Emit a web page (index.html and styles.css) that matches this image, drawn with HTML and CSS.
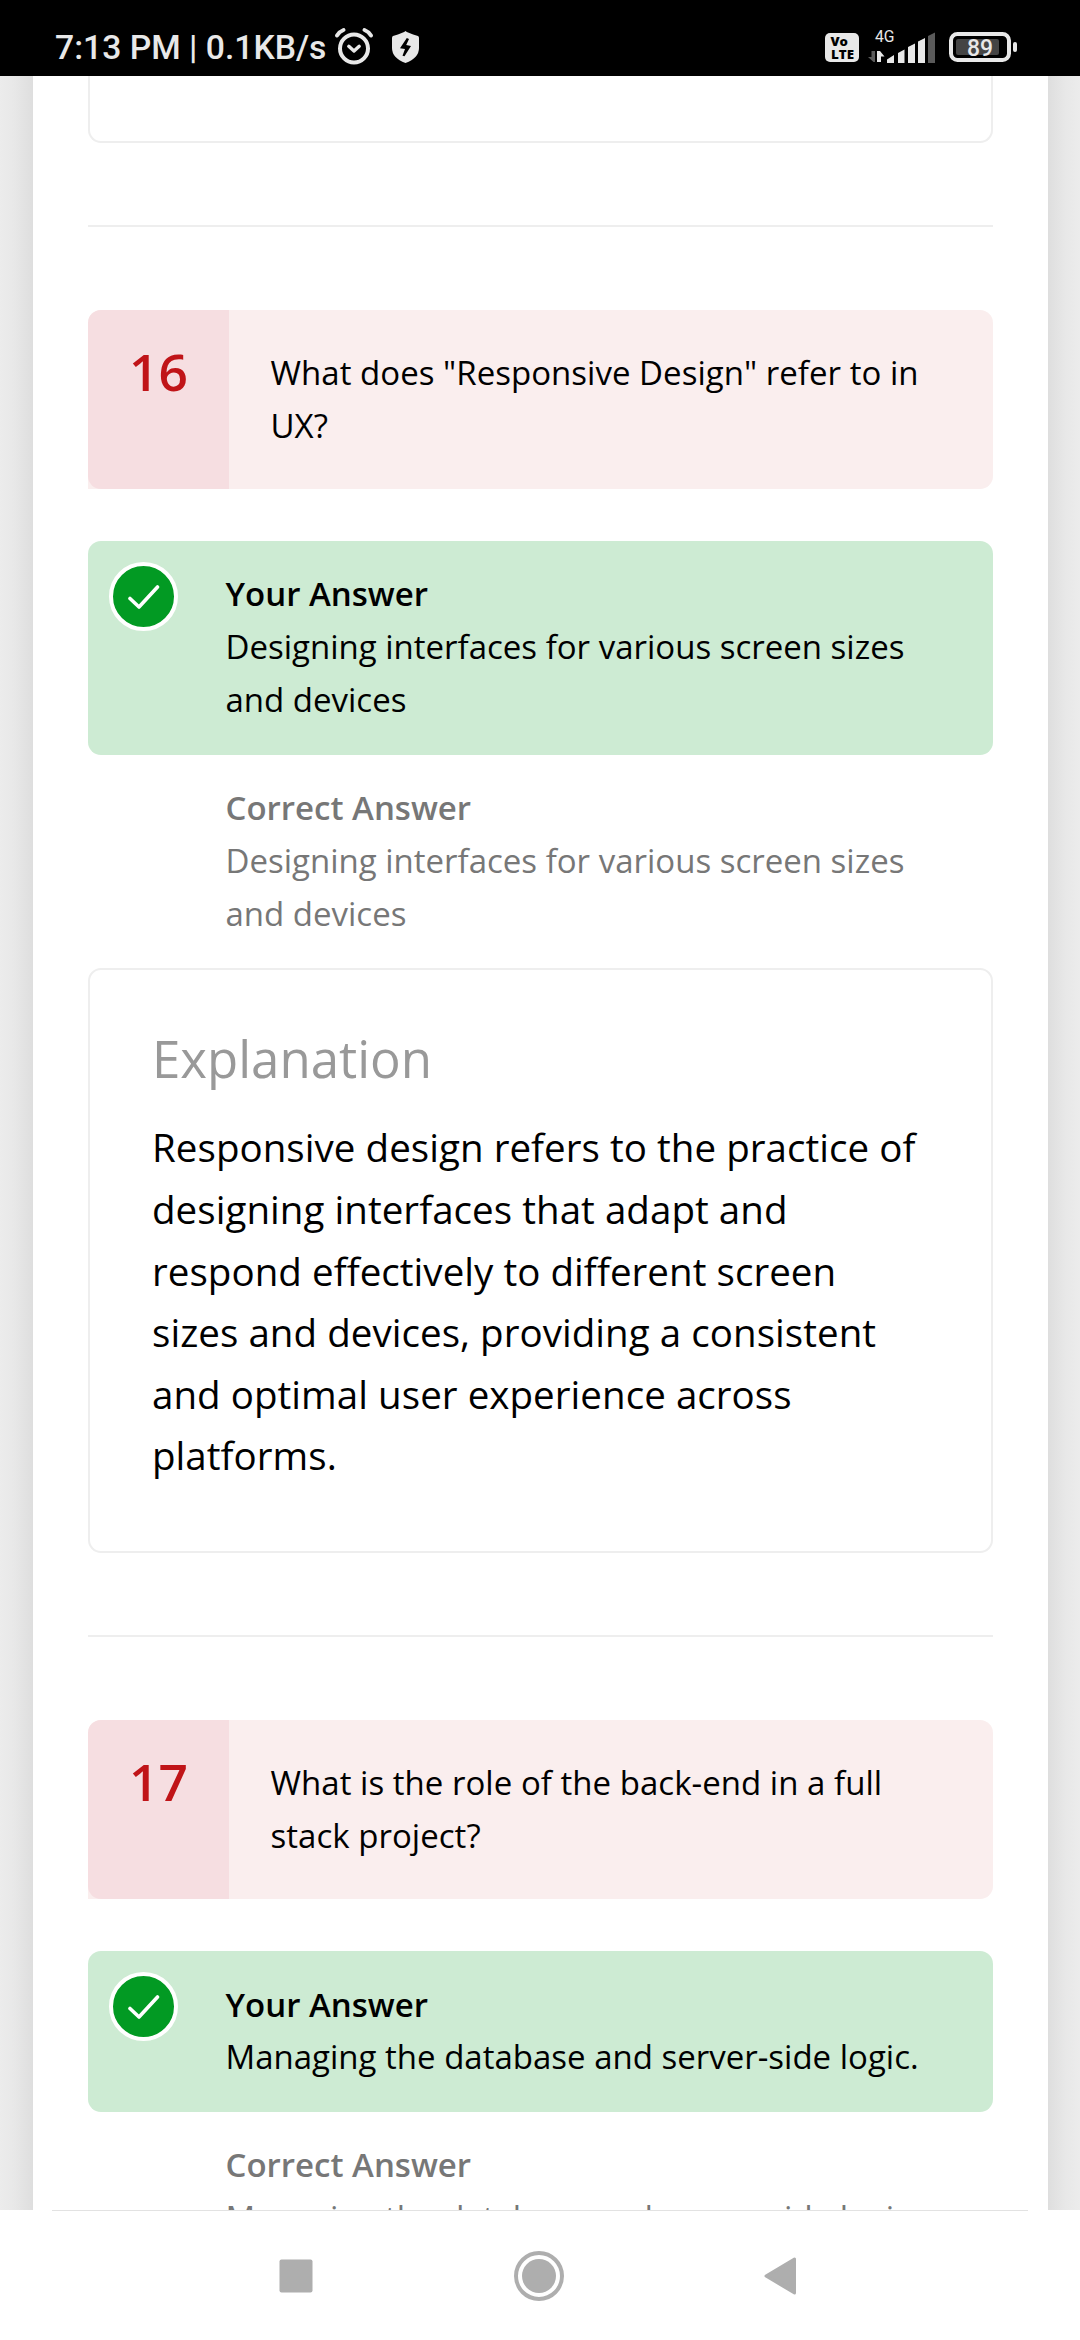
FILE: index.html
```html
<!DOCTYPE html>
<html lang="en">
<head>
<meta charset="utf-8">
<title>Quiz results</title>
<link rel="stylesheet" href="styles.css">
</head>
<body>
<div class="screen">
  <header class="status-bar">
    <div class="status-left">
      <span class="clock">7:13 PM | 0.1KB/s</span>
      <svg class="alarm" width="42" height="40" viewBox="0 0 42 40" fill="none" stroke="#e8e8e8" stroke-linecap="round" stroke-linejoin="round">
        <circle cx="21" cy="22.5" r="14" stroke-width="4"/>
        <path d="M4 9.5 Q6.5 5.5 10.5 4M38 9.5 Q35.5 5.5 31.5 4" stroke-width="4"/>
        <path d="M15.8 20.3 L21 25 L26.2 20.3" stroke-width="3.4"/>
      </svg>
      <svg class="shield" width="27" height="32" viewBox="0 0 27 32">
        <path fill="#e8e8e8" d="M13.5 0 Q15 1.5 26 5 Q27 5.500 27 7 V17 Q27 27 13.500 32 Q0 27 0 17 V7 Q0 5.500 1 5 Q12 1.500 13.500 0Z"/>
        <path fill="#000" d="M14.800 7 L8 17.200 L13 18 L10.500 24.800 L12.500 25.200 L19 15 L14.200 14 L17 8Z"/>
      </svg>
    </div>
    <div class="status-right">
      <svg class="volte" width="34" height="29" viewBox="0 0 34 29">
        <rect width="34" height="29" rx="5" fill="#e8e8e8"/>
        <text class="volte-text" x="5.500" y="13.200" textLength="17.500" lengthAdjust="spacingAndGlyphs">Vo</text>
        <text class="volte-text" x="6" y="25.500" textLength="23" lengthAdjust="spacingAndGlyphs">LTE</text>
      </svg>
      <svg class="signal" width="67" height="34" viewBox="868 29 67 34">
        <text class="net-text" x="875" y="42" textLength="19.500" lengthAdjust="spacingAndGlyphs">4G</text>
        <path fill="#5a5a5a" d="M871.500 51H875V62H873.500L868 57H871.500Z"/>
        <path fill="#e8e8e8" d="M877 51H880L884.500 56.500H881V62H877ZM887 63V59.500L894 55V63ZM898 63V53L904.500 49.500V63ZM908 63V47L915 43.500V63ZM918 63V41.500L925 38V63Z"/>
        <path fill="#5a5a5a" d="M928 63V36L935 32.500V63Z"/>
      </svg>
      <svg class="battery" width="68" height="30" viewBox="0 0 68 30">
        <rect x="2" y="2" width="58" height="26" rx="6.500" fill="none" stroke="#e8e8e8" stroke-width="4"/>
        <rect x="7" y="7" width="43" height="16" rx="2" fill="#444"/>
        <rect x="64" y="10" width="4" height="10" rx="2" fill="#e8e8e8"/>
        <text class="battery-text" x="18" y="23.500" textLength="26" lengthAdjust="spacingAndGlyphs">89</text>
      </svg>
    </div>
  </header>

  <main class="page">
    <div class="card">
      <div class="explanation explanation-tail"></div>
      <hr class="divider">

      <section>
        <div class="question">
          <div class="number">16</div>
          <p class="question-text">What does "Responsive Design" refer to in UX?</p>
        </div>
        <div class="answer answer-yours">
          <span class="check"><svg width="32" height="24" viewBox="0 0 32 24"><path d="M2 13.500 L11 22 L29.500 2" fill="none" stroke="#fff" stroke-width="3.600" stroke-linecap="round" stroke-linejoin="round"/></svg></span>
          <h3>Your Answer</h3>
          <p>Designing interfaces for various screen sizes and devices</p>
        </div>
        <div class="answer answer-correct">
          <h3>Correct Answer</h3>
          <p>Designing interfaces for various screen sizes and devices</p>
        </div>
        <div class="explanation">
          <h2>Explanation</h2>
          <p>Responsive design refers to the practice of designing interfaces that adapt and respond effectively to different screen sizes and devices, providing a consistent and optimal user experience across platforms.</p>
        </div>
      </section>
      <hr class="divider">

      <section>
        <div class="question">
          <div class="number">17</div>
          <p class="question-text">What is the role of the back-end in a full stack project?</p>
        </div>
        <div class="answer answer-yours">
          <span class="check"><svg width="32" height="24" viewBox="0 0 32 24"><path d="M2 13.500 L11 22 L29.500 2" fill="none" stroke="#fff" stroke-width="3.600" stroke-linecap="round" stroke-linejoin="round"/></svg></span>
          <h3>Your Answer</h3>
          <p>Managing the database and server-side logic.</p>
        </div>
        <div class="answer answer-correct">
          <h3>Correct Answer</h3>
          <p>Managing the database and server-side logic.</p>
        </div>
      </section>
    </div>
  </main>

  <nav class="nav-bar">
    <svg width="34" height="34" viewBox="0 0 34 34"><rect x=".5" y=".5" width="33" height="33" rx="2" fill="#aeaeae"/></svg>
    <svg width="50" height="50" viewBox="0 0 50 50"><circle cx="25" cy="25" r="23" fill="none" stroke="#aeaeae" stroke-width="4"/><circle cx="25" cy="25" r="17" fill="#aeaeae"/></svg>
    <svg width="32" height="38" viewBox="0 0 32 38"><path d="M2 19 L30.500 2 V36Z" fill="#aeaeae" stroke="#aeaeae" stroke-width="3" stroke-linejoin="round"/></svg>
  </nav>
</div>
</body>
</html>
```
FILE: styles.css
```css
* {
  box-sizing: border-box;
}

body {
  margin: 0;
  background: #fff;
  font-family: "Open Sans", "Noto Sans", sans-serif;
  color: #000;
}

h2,
h3,
p {
  margin: 0;
}

.screen {
  display: flex;
  flex-direction: column;
  width: 1080px;
  height: 2340px;
  overflow: hidden;
}

/* Status bar */
.status-bar {
  flex: none;
  display: flex;
  justify-content: space-between;
  height: 76px;
  padding: 0 63px 0 55px;
  background: #000;
  color: #e8e8e8;
}

.status-left,
.status-right {
  display: flex;
  align-items: flex-start;
}

.clock {
  width: 278px;
  margin-top: 28px;
  font: 500 33.7px/40px Roboto, sans-serif;
  white-space: nowrap;
}

.alarm {
  margin-top: 26px;
}

.shield {
  margin: 31px 0 0 17px;
}

.volte {
  margin-top: 33px;
}

.signal {
  margin: 29px 14px 0 9px;
  overflow: visible;
}

.battery {
  margin-top: 32px;
}

.volte-text {
  font: 800 12.5px "Open Sans", sans-serif;
  fill: #000;
}

.net-text {
  font: 400 16px Roboto, sans-serif;
  fill: #e8e8e8;
}

.battery-text {
  font: 500 23px Roboto, sans-serif;
  fill: #e8e8e8;
}

/* Page */
.page {
  flex: 1;
  min-height: 0;
  overflow: hidden;
  padding: 0 32px 0 33px;
  background: linear-gradient(to right, #ececec 0, #e8e8e8 14px, #dedede 33px, #dedede 1048px, #e8e8e8 1066px, #ececec 1080px);
}

.card {
  min-height: 100%;
  padding: 0 55px;
  background: #fff;
}

.divider {
  height: 2px;
  margin: 82px 0 83px;
  border: 0;
  background: #eee;
}

.question {
  display: flex;
  height: 179px;
  margin-bottom: 52px;
  border-radius: 13px 13px 13px 0;
  background: #faeeee;
}

.number {
  flex: none;
  width: 141px;
  padding-top: 20.5px;
  border-radius: 13px 0 0 13px;
  background: #f6dee1;
  color: #c01418;
  font-size: 51.5px;
  font-weight: 600;
  line-height: 80px;
  text-align: center;
}

.question-text {
  padding: 37px 41px 0 41.5px;
  font-size: 33px;
  line-height: 52.8px;
  letter-spacing: 0.03px;
}

.answer {
  position: relative;
  padding: 27.4px 55px 27.8px 137.5px;
  border-radius: 13px;
  font-size: 33px;
  line-height: 52.8px;
}

.answer h3 {
  font-size: inherit;
  font-weight: 600;
}

.answer-yours {
  background: #cdebd3;
}

.answer-correct {
  color: #777;
}

.check {
  position: absolute;
  left: 21px;
  top: 21px;
  display: flex;
  align-items: center;
  justify-content: center;
  width: 69px;
  height: 69px;
  border: 4px solid #fff;
  border-radius: 50%;
  background: #029a23;
}

.explanation {
  height: 585px;
  padding: 48px 70px 0 62px;
  border: 2px solid #eee;
  border-radius: 13px;
}

.explanation h2 {
  margin-bottom: 19.2px;
  color: #999;
  font-size: 51px;
  font-weight: 400;
  line-height: 80px;
}

.explanation p {
  font-size: 38.5px;
  line-height: 61.6px;
  letter-spacing: 0.05px;
}

.explanation-tail {
  height: 67px;
  border-top: 0;
  border-radius: 0 0 13px 13px;
}

/* Navigation bar */
.nav-bar {
  flex: none;
  display: flex;
  align-items: center;
  justify-content: space-between;
  height: 130px;
  margin: 0 52px;
  padding: 0 232px 0 227px;
  border-top: 1px solid #e2e2e2;
}
```
